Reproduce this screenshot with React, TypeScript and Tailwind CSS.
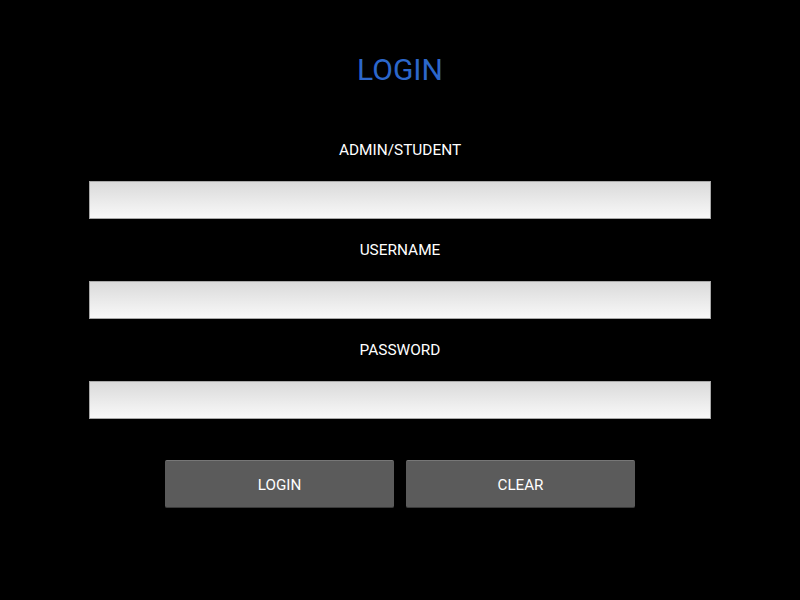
import React from 'react';

const Field: React.FC<{ label: string; type?: string }> = ({ label, type = 'text' }) => (
  <div className="flex flex-col items-center w-full">
    <div className="h-5 leading-5 text-[15.4px] text-white">{label}</div>
    <input
      type={type}
      className="mt-[21px] w-[622px] h-[38px] border border-[#a8a8a8] bg-gradient-to-b from-[#dadada] to-[#f9f9f9] outline-none px-2 text-black"
    />
  </div>
);

export default function App() {
  return (
    <div className="w-[800px] h-[600px] bg-black flex flex-col items-center pt-[54px] font-['Roboto',sans-serif]">
      <h1 className="h-8 leading-8 text-[30px] text-[#2c67cb]">LOGIN</h1>
      <div className="mt-[54px] flex flex-col gap-[21px] w-full items-center">
        <Field label="ADMIN/STUDENT" />
        <Field label="USERNAME" />
        <Field label="PASSWORD" type="password" />
      </div>
      <div className="mt-[41px] flex gap-3">
        <button className="w-[229px] h-12 pt-0.5 bg-[#5b5b5b] rounded-[2px] border-t border-t-[#777] border-b border-b-[#3a3a3a] text-white text-[15.2px]">
          LOGIN
        </button>
        <button className="w-[229px] h-12 pt-0.5 bg-[#5b5b5b] rounded-[2px] border-t border-t-[#777] border-b border-b-[#3a3a3a] text-white text-[15.2px]">
          CLEAR
        </button>
      </div>
    </div>
  );
}
